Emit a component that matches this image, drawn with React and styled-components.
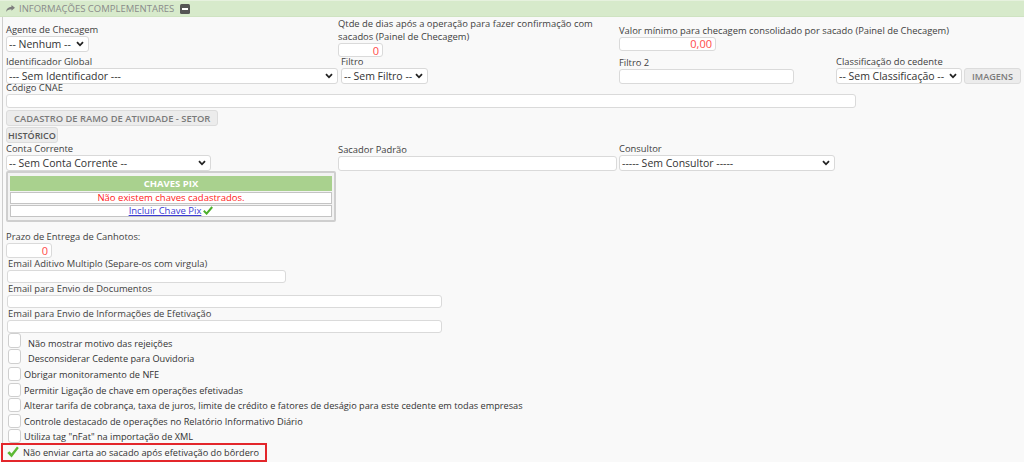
import React from 'react';
import styled, { createGlobalStyle } from 'styled-components';

const GlobalStyle = createGlobalStyle`
  * { box-sizing: border-box; }
  html, body { margin: 0; padding: 0; background: #f9f9f9; }
  body { font-family: "Open Sans", "Liberation Sans", sans-serif; color: #444; }
`;

const ShareIcon = () => (
  <svg width="9" height="7" viewBox="0 0 14 11">
    <path d="M14 4.5 L8.5 0 V2.6 C3.5 2.8 0.5 5.5 0 11 C1.8 7.8 4.5 6.6 8.5 6.6 V9.2 Z" fill="#7d7d7d" />
  </svg>
);

const MinusSquare = () => (
  <svg width="10" height="10" viewBox="0 0 10 10">
    <rect x="0" y="0" width="10" height="10" rx="1.5" fill="#555" />
    <rect x="2" y="4" width="6" height="2" fill="#fff" />
  </svg>
);

const Chevron = () => (
  <svg width="8" height="6" viewBox="0 0 8 6">
    <path d="M1 1.2 L4 4.3 L7 1.2" fill="none" stroke="#222" strokeWidth="1.8" />
  </svg>
);

const SmallCheck = () => (
  <svg width="10" height="9" viewBox="0 0 10 9">
    <path d="M0.8 4.8 L3.6 7.6 L9.2 1" fill="none" stroke="#4caf2a" strokeWidth="2" />
  </svg>
);

const BigCheck = () => (
  <svg width="12" height="12" viewBox="0 0 12 12">
    <path d="M0.3 6.9 L2.4 5.2 L4.5 7.6 L10 0.6 L11.8 2 L4.6 11.4 Z" fill="#5cb935" />
  </svg>
);

const Header = styled.div`
  display: flex;
  align-items: center;
  gap: 4px;
  height: 17px;
  padding-left: 6px;
  background: #d7eacb;
  border-top: 1px solid #e6f1de;
  border-bottom: 1px solid #cfe3c2;
  color: #8a8a8a;
  font-size: 9.5px;
  text-transform: uppercase;
  span { margin-right: 2px; }
`;

const Panel = styled.div`
  width: 1017px;
  margin-left: 2px;
  padding: 0 0 0 3px;
  border-left: 1px solid #cdcdcd;
  border-bottom: 2px solid #dedede;
`;

const FieldRow = styled.div`
  display: grid;
  grid-template-columns: 332px 281px 217px 1fr;
  align-items: ${p => p.$align || 'end'};
  height: ${p => p.$h}px;
`;

const Field = styled.div`
  display: flex;
  flex-direction: column;
  align-items: flex-start;
  padding-left: ${p => p.$pl || 0}px;
`;

const Label = styled.div`
  font-size: 9.4px;
  line-height: ${p => p.$lh || 12}px;
  color: #3f3f3f;
  white-space: ${p => (p.$wrap ? 'normal' : 'nowrap')};
  max-width: ${p => (p.$wrap ? '270px' : 'none')};
  padding-left: ${p => p.$pl || 0}px;
`;

const SelectWrap = styled.div`
  display: flex;
  align-items: center;
  width: ${p => p.$w}px;
  height: 16px;
  padding: 0 4px 0 2px;
  background: #fff;
  border: 1px solid #d9d9d9;
  border-radius: 3px;
  select {
    flex: 1;
    min-width: 0;
    height: 100%;
    padding: 0;
    border: 0;
    outline: none;
    background: transparent;
    appearance: none;
    font: 10.5px "Open Sans", sans-serif;
    color: #333;
  }
`;

const Input = styled.input`
  display: block;
  width: ${p => p.$w}px;
  height: ${p => p.$h || 14}px;
  padding: 0 3px;
  margin-left: ${p => p.$ml || 0}px;
  background: #fff;
  border: 1px solid #dadada;
  border-radius: 3px;
  outline: none;
  text-align: ${p => (p.$num ? 'right' : 'left')};
  font: 11px "Open Sans", sans-serif;
  color: #ff4b4b;
`;

const Button = styled.button`
  display: block;
  height: 16px;
  padding: ${p => p.$pad || '0 7px'};
  margin-top: ${p => p.$mt || 0}px;
  background: #ececec;
  border: 1px solid #dcdcdc;
  border-radius: 3px;
  font: 600 ${p => p.$fs || 9.1}px "Open Sans", sans-serif;
  color: ${p => p.$color || '#7a7a7a'};
  text-transform: uppercase;
  white-space: nowrap;
`;

const Inline = styled.div`
  display: flex;
  gap: 2px;
`;

const PixBox = styled.div`
  width: 330px;
  padding: 2px;
  background: #f3f3f3;
  border: 2px solid #cfcfcf;
  border-radius: 2px;
`;

const PixTable = styled.table`
  width: 100%;
  border-collapse: separate;
  border-spacing: 0 1px;
  font-size: 9.5px;
  text-align: center;
  th {
    height: 15px;
    padding: 0;
    background: #a9d18e;
    color: #fff;
    font-weight: 700;
    text-transform: uppercase;
  }
  td {
    height: 12px;
    padding: 0;
    line-height: 10px;
    background: #fff;
    border: 1px solid #c4c4c4;
  }
`;

const Empty = styled.span`
  color: #ff1a1a;
`;

const Link = styled.a`
  color: #3b3bd4;
  text-decoration: underline;
  svg { margin-left: 2px; vertical-align: -1px; }
`;

const Block = styled.div`
  display: flex;
  flex-direction: column;
  align-items: flex-start;
  margin-top: ${p => p.$mt || 0}px;
`;

const CheckRow = styled.div`
  display: flex;
  align-items: flex-start;
  height: ${p => p.$h}px;
  font-size: 9.2px;
  line-height: 12px;
  color: #333;
`;

const Box = styled.span`
  flex: none;
  width: 13px;
  height: ${p => p.$bh || 14}px;
  margin: ${p => p.$bt ?? 2}px 0 0 2px;
  background: #fff;
  border: 1px solid #cfcfcf;
  border-radius: 3px;
`;

const CheckText = styled.span`
  padding-top: ${p => p.$pt}px;
  margin-left: ${p => p.$ml || 3}px;
  white-space: nowrap;
`;

const Highlight = styled.div`
  display: flex;
  align-items: center;
  gap: 4px;
  width: 266px;
  height: 19px;
  margin-left: -5px;
  padding-left: 4px;
  border: 2px solid #e3262b;
  font-size: 9.2px;
  color: #333;
`;

const Select = ({ w, value }) => (
  <SelectWrap $w={w}>
    <select defaultValue={value}>
      <option>{value}</option>
    </select>
    <Chevron />
  </SelectWrap>
);

const checks = [
  { text: 'Não mostrar motivo das rejeições', h: 16, bt: 0, bh: 15, pt: 5, ml: 7 },
  { text: 'Desconsiderar Cedente para Ouvidoria', h: 16, bt: 0, bh: 15, pt: 4, ml: 7 },
  { text: 'Obrigar monitoramento de NFE', h: 15.5, pt: 4 },
  { text: 'Permitir Ligação de chave em operações efetivadas', h: 15.5, pt: 4 },
  { text: 'Alterar tarifa de cobrança, taxa de juros, limite de crédito e fatores de deságio para este cedente em todas empresas', h: 15.5, pt: 4 },
  { text: 'Controle destacado de operações no Relatório Informativo Diário', h: 15.5, pt: 4 },
  { text: 'Utiliza tag "nFat" na importação de XML', h: 15.5, pt: 4 },
];

const App = () => {
  return (
    <>
      <GlobalStyle />
      <Header>
        <ShareIcon />
        <span>Informações Complementares</span>
        <MinusSquare />
      </Header>
      <Panel>
        <FieldRow $align="center" $h={39}>
          <Field>
            <Label $lh={13}>Agente de Checagem</Label>
            <Select w={83} value="-- Nenhum --" />
          </Field>
          <Field>
            <Label $wrap $lh={13}>Qtde de dias após a operação para fazer confirmação com sacados (Painel de Checagem)</Label>
            <Input $w={45} $num defaultValue="0" />
          </Field>
          <Field>
            <Label $lh={13}>Valor mínimo para checagem consolidado por sacado (Painel de Checagem)</Label>
            <Input $w={97} $num defaultValue="0,00" />
          </Field>
        </FieldRow>
        <FieldRow $h={26}>
          <Field>
            <Label>Identificador Global</Label>
            <Select w={332} value="--- Sem Identificador ---" />
          </Field>
          <Field $pl={3}>
            <Label>Filtro</Label>
            <Select w={87} value="-- Sem Filtro --" />
          </Field>
          <Field>
            <Label>Filtro 2</Label>
            <Input $w={175} $h={15} />
          </Field>
          <Field>
            <Label>Classificação do cedente</Label>
            <Inline>
              <Select w={126} value="-- Sem Classificação --" />
              <Button>Imagens</Button>
            </Inline>
          </Field>
        </FieldRow>
        <Field>
          <Label>Código CNAE</Label>
          <Input $w={850} />
        </Field>
        <Button $mt={2} $fs={9.4}>Cadastro de ramo de atividade - setor</Button>
        <Button $mt={1} $pad="0 1px" $fs={9} $color="#555">Histórico</Button>
        <FieldRow $h={28}>
          <Field>
            <Label>Conta Corrente</Label>
            <Select w={205} value="-- Sem Conta Corrente --" />
          </Field>
          <Field>
            <Label>Sacador Padrão</Label>
            <Input $w={279} $h={15} />
          </Field>
          <Field>
            <Label>Consultor</Label>
            <Select w={216} value="----- Sem Consultor -----" />
          </Field>
        </FieldRow>
        <PixBox>
          <PixTable>
            <thead>
              <tr><th>Chaves PIX</th></tr>
            </thead>
            <tbody>
              <tr><td><Empty>Não existem chaves cadastrados.</Empty></td></tr>
              <tr><td><Link href="#">Incluir Chave Pix<SmallCheck /></Link></td></tr>
            </tbody>
          </PixTable>
        </PixBox>
        <Block $mt={9}>
          <Label>Prazo de Entrega de Canhotos:</Label>
          <Input $w={46} $h={15} $num defaultValue="0" />
        </Block>
        <Block>
          <Label $pl={2}>Email Aditivo Multiplo (Separe-os com virgula)</Label>
          <Input $w={279} $h={13} $ml={1} />
        </Block>
        <Block>
          <Label $pl={2}>Email para Envio de Documentos</Label>
          <Input $w={435} $h={13} $ml={1} />
        </Block>
        <Block>
          <Label $pl={2}>Email para Envio de Informações de Efetivação</Label>
          <Input $w={435} $h={13} $ml={1} />
        </Block>
        {checks.map(c => (
          <CheckRow key={c.text} $h={c.h}>
            <Box $bt={c.bt} $bh={c.bh} />
            <CheckText $pt={c.pt} $ml={c.ml}>{c.text}</CheckText>
          </CheckRow>
        ))}
        <Highlight>
          <BigCheck />
          <span>Não enviar carta ao sacado após efetivação do bôrdero</span>
        </Highlight>
      </Panel>
    </>
  );
};

export default App;
